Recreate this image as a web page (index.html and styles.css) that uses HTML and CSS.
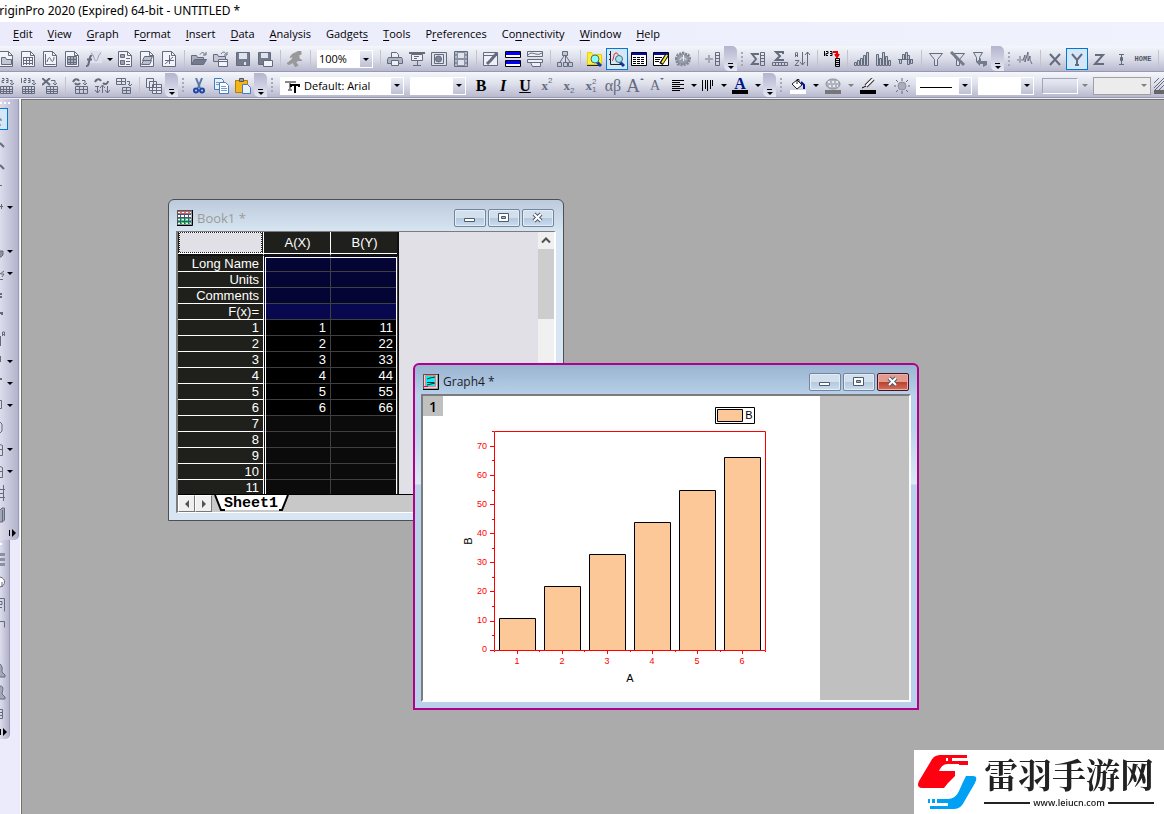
FILE: index.html
```html
<!DOCTYPE html>
<html lang="en">
<head>
<meta charset="utf-8">
<title>OriginPro 2020 (Expired) 64-bit - UNTITLED *</title>
<link rel="stylesheet" href="styles.css">
</head>
<body>
<svg class="sprite" aria-hidden="true">
  <symbol id="page" viewBox="0 0 16 16"><path fill="#f2f4fa" d="M1.5.5h9l4 4v11h-13z"/><path d="M10.5.5v4h4"/></symbol>
  <symbol id="i-folder" viewBox="0 0 16 16"><use href="#page"/><path fill="#c3c8d6" d="M3.5 13.5v-7h4l1 2h5v5z"/></symbol>
  <symbol id="i-book" viewBox="0 0 16 16"><use href="#page"/><path d="M3 6.5h10M3 9.5h10M3 12.5h10M3.5 6v8M6.5 6v8M9.5 6v8M12.5 6v8"/></symbol>
  <symbol id="i-graph" viewBox="0 0 16 16"><use href="#page"/><path d="M3.5 3v10.5h10M5 11c2-6 3-5 4-2s3 1 3-3"/></symbol>
  <symbol id="i-matrix" viewBox="0 0 16 16"><use href="#page"/><path fill="#a9afbf" d="M3.5 5.500h9v8h-9z"/><path d="M3 8.5h10M3 11.5h10M6.5 6v8M9.5 6v8"/></symbol>
  <symbol id="i-func" viewBox="0 0 16 16"><path fill="#dfe2ec" stroke="none" d="M4 0h12v12H4z"/><path stroke="#9aa0b4" d="M5 2c3 1 3 8 5 8s2-7 5-8"/><path stroke-width="2" d="M6 5c-2-1-2 2-3 6s-1 4-3 4M1 8.5h5"/></symbol>
  <symbol id="i-layout" viewBox="0 0 16 16"><use href="#page"/><path fill="#9aa0b4" d="M3.5 3.5h4v3h-4zM3.5 9.5h4v4h-4z"/><path d="M9 7.5h4M9 10.5h4M9 13.5h4"/></symbol>
  <symbol id="i-note" viewBox="0 0 16 16"><use href="#page"/><path fill="#b9bfce" d="M5.5 5.5h8l-2 4h-8zM4.5 9.5h8l-2 4h-8z"/></symbol>
  <symbol id="i-axis" viewBox="0 0 16 16"><use href="#page"/><path d="M8.5 4v9M4 9.5h9M4 13l8-7"/></symbol>
  <symbol id="i-open" viewBox="0 0 16 16"><path fill="#aab0c0" d="M.5 13.5v-9h5l1 2h6v2"/><path fill="#737b8c" d="M.5 13.5l3-5h12l-3 5z"/><path d="M9 3.5c2-3 4-2 5 0M15 1v3h-3"/></symbol>
  <symbol id="i-opent" viewBox="0 0 16 16"><path fill="#c3c8d6" d="M.5 10.500v-7h4l1 2h7v5z"/><path fill="#f2f4fa" d="M5.5 8.5h9v7h-9z"/><path d="M6 10.5h8M8 3c2-3 4-2 5 0M14 1v3h-3"/></symbol>
  <symbol id="i-save" viewBox="0 0 16 16"><path fill="#737b8c" d="M1.5 1.5h13v13h-13z"/><path fill="#dfe3ee" stroke="none" d="M4 2h8v6H4zM9 11h2v3H9z"/></symbol>
  <symbol id="i-savet" viewBox="0 0 16 16"><path fill="#737b8c" d="M1.5 1.5h12v12h-12z"/><path fill="#dfe3ee" stroke="none" d="M4 2h7v5H4z"/><path fill="#f2f4fa" d="M6.5 9.5h9v6h-9z"/></symbol>
  <symbol id="i-run" viewBox="0 0 16 16"><path fill="#999" stroke="#999" d="M11 .5h3v3h-2v4l3 2h-4l-2 2 2 3-3 1-2-4-4 2-2-1 5-4 1-3-3 1 2-3 4-2z"/></symbol>
  <symbol id="i-print" viewBox="0 0 16 16"><path fill="#eef0f7" d="M4.5 6V1.5h5l2 2V6"/><path fill="#aeb4c6" d="M1.5 6.5l-1 2v4h15v-4l-1-2z"/><path fill="#eef0f7" d="M4.5 9.5h7v5h-7z"/></symbol>
  <symbol id="i-slide" viewBox="0 0 16 16"><path stroke-width="2" d="M0 2h16"/><path fill="#eef0f7" d="M2.5 3.5h11v6h-11z"/><path d="M5 5.5h5M5 7.5h3M8.5 10v4M4 14.5h8"/></symbol>
  <symbol id="i-frame" viewBox="0 0 16 16"><path fill="#dfe2ec" d="M.5 1.5h15v13H.5zM3.5 3.5h9v9h-9z"/><circle cx="7.5" cy="8" r="3" fill="#7d8498"/></symbol>
  <symbol id="i-film" viewBox="0 0 16 16"><path fill="#8a91a2" d="M1.5.5h13v15h-13z"/><path fill="#dfe3ee" stroke="none" d="M5 2h6v5H5zM5 9h6v5H5z"/><path stroke="#dfe3ee" stroke-dasharray="2 2" d="M3 1v14M13 1v14"/></symbol>
  <symbol id="i-brush" viewBox="0 0 16 16"><path fill="#eef0f7" d="M.5 1.5h14v13H.5z"/><path d="M1 4.5h13"/><path stroke-width="3" d="M14 2L8 9l-4 4"/></symbol>
  <symbol id="i-blue" viewBox="0 0 16 16"><path fill="#fff" stroke="#000" d="M.5.5h15v6H.5zM.5 9.5h15v6H.5z"/><path stroke="#00f" stroke-width="3" d="M1 2.500h14M1 11.500h14"/></symbol>
  <symbol id="i-stack" viewBox="0 0 16 16"><path fill="#eef0f7" d="M.5.5h15v5H.5zM.5 8.5h15v3H.5zM3.5 11.5h10v4h-8z"/><path d="M1 4c4-5 8 2 14-2"/></symbol>
  <symbol id="i-tree" viewBox="0 0 16 16"><path fill="#c3c8d6" d="M5.5.5h5v4h-5zM.5 11.5h4v4h-4zM6.5 11.5h4v4h-4zM11.5 11.5h4v4h-4z"/><path d="M8.5 5v6M7 5l-4 6M9 5l4 6"/></symbol>
  <symbol id="i-find" viewBox="0 0 16 16"><path fill="#ffee33" stroke="#e6d200" d="M.5 3.5v-2h4l1 2h9v10H.5z"/><path stroke="#222" d="M0 14.5h13"/><path stroke="#1038a0" stroke-width="3" d="M10 11l4 4"/><circle cx="8" cy="8" r="4" fill="#8ff" stroke="#567"/></symbol>
  <symbol id="i-gfind" viewBox="0 0 16 16"><path stroke="#222" d="M1.5 0v13.5H15M0 3.5h2M0 8.5h2"/><path stroke="#e02020" d="M3 10c2-1 1-8 4-8s2 5 5 4"/><path stroke="#1038a0" stroke-width="3" d="M11 11l4 4"/><circle cx="10" cy="8" r="3.5" fill="#9fe6ee" stroke="#567"/></symbol>
  <symbol id="i-list" viewBox="0 0 16 16"><path fill="#fff" stroke="#000" d="M.5 1.5h15v13H.5z"/><path stroke="#0008c0" stroke-width="2" d="M1 3h14"/><path stroke="#000" stroke-dasharray="3 1" d="M2 6.5h12M2 8.5h12M2 10.5h12M2 12.5h12"/></symbol>
  <symbol id="i-edit" viewBox="0 0 16 16"><path fill="#fff" stroke="#000" d="M.5 1.5h15v13H.5z"/><path stroke="#0008c0" stroke-width="2" d="M1 3h14"/><path stroke="#000" d="M2 6.5h7M2 8.5h5M2 10.5h4"/><path stroke="#000" stroke-width="4" d="M14 4l-6 9"/><path stroke="#ffe633" stroke-width="2" d="M14 4l-5 8"/></symbol>
  <symbol id="i-gear" viewBox="0 0 16 16"><path fill="#9a9fac" stroke="#808693" stroke-dasharray="2 1" stroke-width="3" d="M1 8l2-4 5-2 5 2 2 4-2 4-5 2-5-1z"/><path stroke="#eef0f7" d="M5 9c0-3 6-3 6 0M8.5 4v6"/></symbol>
  <symbol id="i-addcol" viewBox="0 0 16 16"><path stroke="#a4a9b8" stroke-width="2" d="M0 8h8M4 4v8"/><path d="M10.5 1.5h4v13h-4zM10 4.5h4M10 7.5h4M10 10.5h4"/></symbol>
  <symbol id="i-sumcol" viewBox="0 0 16 16"><path stroke-width="2" d="M8 4V3H2l4 5-4 5h6v-1"/><path d="M10.5 1.5h4v13h-4zM10 4.5h4M10 7.5h4M10 10.5h4"/></symbol>
  <symbol id="i-sumrow" viewBox="0 0 16 16"><path stroke-width="2" d="M11 3V1H4l4 4-4 4h7V8"/><path d="M.5 11.5h15v3H.5zM3.5 12v3M6.5 12v3M9.5 12v3M12.5 12v3"/></symbol>
  <symbol id="i-sort" viewBox="0 0 16 16"><path d="M1.5 6V2l1-1 1 1v4M1 4.5h3M1 9.5h4l-4 5h4M8.5 1v13M6 11l2.5 3 2.5-3M13.5 15V1M11 4l2.5-3L16 4"/></symbol>
  <symbol id="i-setnum" viewBox="0 0 16 16"><path stroke="#000" d="M.5 0v5M2 .5h2v2H2v2h2M6 .5h2v4H6M6 2.5h2M11.5 7.500h4v8h-4zM11 9.5h4M11 11.5h4M11 13.5h4"/><path stroke="#e00" stroke-width="2" d="M9 1h4v3M11 3l2 3 2-3"/></symbol>
  <symbol id="i-bars1" viewBox="0 0 16 16"><path fill="#c3c8d6" d="M.5 11.5h2v3h-2zM3.5 9.5h2v5h-2zM6.5 7.5h2v7h-2zM9.5 4.5h2v10h-2zM12.5 1.5h2v13h-2z"/></symbol>
  <symbol id="i-bars2" viewBox="0 0 16 16"><path fill="#c3c8d6" d="M.5 3.5h2v11h-2zM3.5 7.5h2v7h-2zM6.5 1.5h2v13h-2zM9.5 5.5h2v9h-2zM12.5 9.5h2v5h-2z"/></symbol>
  <symbol id="i-bars3" viewBox="0 0 16 16"><path fill="#c3c8d6" d="M0 8.5h15M1.5 8.5h2v4h-2zM4.5 3.5h2v5h-2zM7.5 1.5h2v7h-2zM9.5 4.5h2v9h-2zM12.5 8.5h2v4h-2z"/></symbol>
  <symbol id="i-filter" viewBox="0 0 16 16"><path fill="#dfe3ee" d="M1.5 2.5h13l-5 6v6h-3v-6z"/></symbol>
  <symbol id="i-nofilter" viewBox="0 0 16 16"><path fill="#dfe3ee" d="M2.5 2.5h12l-5 6v6h-3v-6z"/><path stroke="#737b8c" stroke-width="3" d="M1 1l13 13"/></symbol>
  <symbol id="i-refilter" viewBox="0 0 16 16"><path fill="#dfe3ee" d="M1.5 1.5h9l-3 5v4h-3v-4z"/><path fill="#737b8c" stroke="none" d="M4 11l5-4v3h6v4l-4 2v-3H8v2z"/></symbol>
  <symbol id="i-wave" viewBox="0 0 16 16"><path stroke="#a4a9b8" stroke-width="2" d="M0 9h7M3 5v7"/><path d="M6 9l2-5v7l3-10v9l2-5v4l2 4"/></symbol>
  <symbol id="i-x" viewBox="0 0 16 16"><path stroke-width="2" d="M3 3l10 11M13 3L3 14"/></symbol>
  <symbol id="i-y" viewBox="0 0 16 16"><path stroke-width="2" d="M3 3l5 6 5-6M8 9v5M6 14h4"/></symbol>
  <symbol id="i-z" viewBox="0 0 16 16"><path stroke-width="2" d="M4 4h8L4 13h9"/></symbol>
  <symbol id="i-err" viewBox="0 0 16 16"><path d="M6 3.5h5M8.5 3v10M6 13.5h5"/><path fill="#646b7d" d="M7.5 6.5h2v3h-2z"/></symbol>
  <symbol id="i-imp" viewBox="0 0 16 16"><path d="M1.5 0v5M4 .5h2v2H4v2h2M8 .5h2v4H8M8 2.5h2M12 2.5h2v3M12 5l2 2 2-2M2.5 8.5h12v7h-12zM2 11.5h12M2 13.5h12M5.5 8v7M8.5 8v7M11.5 8v7"/></symbol>
  <symbol id="i-xl" viewBox="0 0 16 16"><path stroke-width="2" d="M0 0l8 7M8 0L0 7"/><path d="M9 2.5h4v3M11 5l2 2 2-2M4.5 8.5h11v7h-11zM4 11.5h11M4 13.5h11M8.5 8v7M11.5 8v7"/></symbol>
  <symbol id="i-recalc" viewBox="0 0 16 16"><path stroke-width="2" d="M1 4c2-4 5-3 6-1M8 5c-1 2-4 2-5 0"/><path d="M10 2.5h3v3M11 5l2 2 2-2M3.5 8.5h12v7h-12zM3 11.5h12M7.5 8v7M11.5 8v7"/></symbol>
  <symbol id="i-recalc2" viewBox="0 0 16 16"><path stroke-width="2" d="M1 4c2-4 5-3 6-1M9 5c2 2 5 1 5-2"/><path d="M3.5 8v7M1 12l2.5 3L6 12M8.5 15V8M6 10l2.5-3 2.5 3M13.5 8v7M11 12l2.5 3 2.5-3M1 8.5h4"/></symbol>
  <symbol id="i-trans" viewBox="0 0 16 16"><path d="M.5.5h9v6h-9zM0 3.5h9M5.5 1v6M11 3.5h2.5v3M12 6l2 2 2-2M6.5 9.5h8v6h-8zM6 12.5h8M10.5 9v6"/></symbol>
  <symbol id="i-dup" viewBox="0 0 16 16"><path fill="#e6e9f2" d="M.5.5h7v9h-7zM3.5 3.5h7v9h-7zM6.5 6.5h9v9h-9z"/><path d="M7 9.5h8M7 12.5h8M10.5 7v8"/></symbol>
  <symbol id="i-cut" viewBox="0 0 16 16"><path stroke="#5a7aa6" stroke-width="2" d="M5 0l4 10M11 0L7 10"/><circle cx="5" cy="12.5" r="2" stroke="#1c49a8" stroke-width="2"/><circle cx="11" cy="12.5" r="2" stroke="#1c49a8" stroke-width="2"/></symbol>
  <symbol id="i-copy" viewBox="0 0 16 16"><path fill="#e9f1fb" stroke="#4a78b8" d="M1.5.5h7l2 2v9h-9z"/><path fill="#fff" stroke="#4a78b8" d="M6.5 4.5h6l3 3v8h-9z"/><path stroke="#6d9bd6" d="M3 4.5h3M3 6.5h3M8 8.5h5M8 10.5h6M8 12.5h6"/></symbol>
  <symbol id="i-paste" viewBox="0 0 16 16"><path fill="#f2b61b" stroke="#b57b08" d="M.5 2.5h12v12H.5z"/><path fill="#999" stroke="#555" d="M4.5.5h4v3h-4z"/><path fill="#e9f1fb" stroke="#4a78b8" d="M7.5 6.5h5l3 3v6h-8z"/></symbol>
  <symbol id="i-align" viewBox="0 0 16 16"><path stroke="#000" d="M2 2.5h12M2 4.500h8M2 6.500h12M2 8.500h8M2 10.500h12M2 12.500h8"/></symbol>
  <symbol id="i-vlines" viewBox="0 0 16 16"><path stroke="#000" d="M2.5 2v11M5.5 2v9M7.5 2v11M10.500 2v9M12.500 2v6"/></symbol>
  <symbol id="i-bucket" viewBox="0 0 16 16"><path fill="#fff" stroke="#222" d="M2 6l5-4 5 5-5 4zM7 6V1.5h2V4"/><path stroke="#00118c" stroke-width="2" d="M11 4l3 3v4"/><path fill="#fff" stroke="none" d="M0 12h16v4H0z"/></symbol>
  <symbol id="i-palette" viewBox="0 0 16 16"><ellipse cx="8" cy="6" rx="7" ry="5" fill="#b0b4be" stroke="#8b909c"/><path stroke="#e8eaf2" stroke-width="2" stroke-dasharray="2 2" d="M3 4h10M4 8h9"/><path fill="#777" stroke="none" d="M0 12h16v4H0z"/></symbol>
  <symbol id="i-pen" viewBox="0 0 16 16"><path stroke="#333" stroke-width="4" d="M13 1L6 8"/><path stroke="#fff" stroke-width="2" d="M13 1L6 8"/><path stroke="#000" d="M2 10l4-2"/><path fill="#000" stroke="none" d="M0 12h16v4H0z"/></symbol>
  <symbol id="i-sun" viewBox="0 0 16 16"><circle cx="8" cy="8" r="4" fill="#a9aebb" stroke="#8a909f"/><path d="M8 0v3M8 13v3M0 8h2M14 8h2M2 2l2 2M14 2l-2 2M2 14l2-2M14 14l-2-2"/></symbol>
  <symbol id="i-hatch" viewBox="0 0 16 16"><path d="M0 5l5-5M0 10L10 0M1 12L13 0M5 12L16 1"/><path fill="#666" stroke="none" d="M0 12h16v4H0z"/></symbol>
  <symbol id="i-T" viewBox="0 0 16 16"><path stroke="#888" stroke-width="2" d="M1 5V4h9v1M5 4v9M3 12h4"/><path stroke="#000" stroke-width="2" d="M6 9V7h8v2M10 7v8"/></symbol>
  <symbol id="w-min" viewBox="0 0 16 12"><path fill="#fff" stroke="#4d5a6b" d="M2.5 6.5h10v3h-10z"/></symbol>
  <symbol id="w-max" viewBox="0 0 16 12"><path fill="#fff" stroke="#4d5a6b" d="M2.5 1.5h10v8h-10z"/><path fill="#9cb3cc" stroke="#4d5a6b" d="M5.500 4.500h4v2h-4z"/></symbol>
  <symbol id="w-close" viewBox="0 0 16 12"><path stroke="#4d5a6b" stroke-width="4" d="M4 2l7 7M11 2L4 9"/><path stroke="#fff" stroke-width="2" d="M4 2l7 7M11 2L4 9"/></symbol>
</svg>

<header class="titlebar"><h1>OriginPro 2020 (Expired) 64-bit - UNTITLED *</h1></header>
<nav class="menubar" aria-label="Main menu">
  <button><u>E</u>dit</button><button><u>V</u>iew</button><button><u>G</u>raph</button><button>F<u>o</u>rmat</button><button><u>I</u>nsert</button><button><u>D</u>ata</button><button><u>A</u>nalysis</button><button>Gadget<u>s</u></button><button><u>T</u>ools</button><button>P<u>r</u>eferences</button><button>Co<u>n</u>nectivity</button><button><u>W</u>indow</button><button><u>H</u>elp</button>
</nav>

<div class="toolbar" role="toolbar" aria-label="Standard">
  <button class="tool" aria-label="New folder"><svg><use href="#i-folder"/></svg></button>
  <button class="tool" aria-label="New workbook"><svg><use href="#i-book"/></svg></button>
  <button class="tool" aria-label="New graph"><svg><use href="#i-graph"/></svg></button>
  <button class="tool" aria-label="New matrix"><svg><use href="#i-matrix"/></svg></button>
  <button class="tool" aria-label="New function plot"><svg><use href="#i-func"/></svg></button>
  <button class="drop" aria-label="Function plot types"></button>
  <button class="tool" aria-label="New layout"><svg><use href="#i-layout"/></svg></button>
  <button class="tool" aria-label="New notes"><svg><use href="#i-note"/></svg></button>
  <button class="tool" aria-label="Digitize image"><svg><use href="#i-axis"/></svg></button>
  <span class="sep"></span>
  <button class="tool" aria-label="Open"><svg><use href="#i-open"/></svg></button>
  <button class="tool" aria-label="Open template"><svg><use href="#i-opent"/></svg></button>
  <button class="tool" aria-label="Save"><svg><use href="#i-save"/></svg></button>
  <button class="tool" aria-label="Save template"><svg><use href="#i-savet"/></svg></button>
  <span class="sep"></span>
  <button class="tool" aria-label="Run"><svg><use href="#i-run"/></svg></button>
  <span class="sep"></span>
  <label class="combo zoom"><select aria-label="Zoom"><option>100%</option></select><i></i></label>
  <span class="sep"></span>
  <button class="tool" aria-label="Print"><svg><use href="#i-print"/></svg></button>
  <button class="tool" aria-label="Slide show"><svg><use href="#i-slide"/></svg></button>
  <button class="tool" aria-label="Send to presentation"><svg><use href="#i-frame"/></svg></button>
  <button class="tool" aria-label="Make movie"><svg><use href="#i-film"/></svg></button>
  <span class="sep"></span>
  <button class="tool" aria-label="Theme brush"><svg><use href="#i-brush"/></svg></button>
  <button class="tool" aria-label="Split"><svg><use href="#i-blue"/></svg></button>
  <button class="tool" aria-label="Merge"><svg><use href="#i-stack"/></svg></button>
  <span class="sep"></span>
  <button class="tool" aria-label="Hierarchy"><svg><use href="#i-tree"/></svg></button>
  <span class="sep"></span>
  <button class="tool" aria-label="Project explorer"><svg><use href="#i-find"/></svg></button>
  <button class="tool on" aria-label="Quick view" aria-pressed="true"><svg><use href="#i-gfind"/></svg></button>
  <button class="tool" aria-label="Results log"><svg><use href="#i-list"/></svg></button>
  <button class="tool" aria-label="Script window"><svg><use href="#i-edit"/></svg></button>
  <button class="tool" aria-label="Code builder"><svg><use href="#i-gear"/></svg></button>
  <span class="sep"></span>
  <button class="tool" aria-label="Add column"><svg><use href="#i-addcol"/></svg></button>
  <button class="more" aria-label="Toolbar options"></button><span class="grip"></span>
  <button class="tool" aria-label="Column statistics"><svg><use href="#i-sumcol"/></svg></button>
  <button class="tool" aria-label="Row statistics"><svg><use href="#i-sumrow"/></svg></button>
  <button class="tool" aria-label="Sort"><svg><use href="#i-sort"/></svg></button>
  <span class="sep"></span>
  <button class="tool" aria-label="Set column values"><svg><use href="#i-setnum"/></svg></button>
  <span class="sep"></span>
  <button class="tool" aria-label="Row numbers"><svg><use href="#i-bars1"/></svg></button>
  <button class="tool" aria-label="Uniform random"><svg><use href="#i-bars2"/></svg></button>
  <button class="tool" aria-label="Normal random"><svg><use href="#i-bars3"/></svg></button>
  <span class="sep"></span>
  <button class="tool" aria-label="Filter"><svg><use href="#i-filter"/></svg></button>
  <button class="tool" aria-label="Disable filter"><svg><use href="#i-nofilter"/></svg></button>
  <button class="tool" aria-label="Reapply filter"><svg><use href="#i-refilter"/></svg></button>
  <button class="more" aria-label="Toolbar options"></button><span class="grip"></span>
  <button class="tool" aria-label="Add sparkline"><svg><use href="#i-wave"/></svg></button>
  <span class="sep"></span>
  <button class="tool" aria-label="Set as X"><svg><use href="#i-x"/></svg></button>
  <button class="tool on" aria-label="Set as Y" aria-pressed="true"><svg><use href="#i-y"/></svg></button>
  <button class="tool" aria-label="Set as Z"><svg><use href="#i-z"/></svg></button>
  <button class="tool" aria-label="Set as error"><svg><use href="#i-err"/></svg></button>
  <button class="tool home">HOME</button>
  <span class="sep"></span>
</div>

<div class="toolbar" role="toolbar" aria-label="Format">
  <button class="tool" aria-label="Import single"><svg><use href="#i-imp"/></svg></button>
  <button class="tool" aria-label="Import multiple"><svg><use href="#i-imp"/></svg></button>
  <button class="tool" aria-label="Import Excel"><svg><use href="#i-xl"/></svg></button>
  <span class="sep"></span>
  <button class="tool" aria-label="Re-import"><svg><use href="#i-recalc"/></svg></button>
  <button class="tool" aria-label="Recalculate"><svg><use href="#i-recalc2"/></svg></button>
  <button class="tool" aria-label="Transfer"><svg><use href="#i-trans"/></svg></button>
  <span class="sep"></span>
  <button class="tool" aria-label="Duplicate"><svg><use href="#i-dup"/></svg></button>
  <button class="more" aria-label="Toolbar options"></button><span class="grip"></span>
  <button class="tool" aria-label="Cut"><svg><use href="#i-cut"/></svg></button>
  <button class="tool" aria-label="Copy"><svg><use href="#i-copy"/></svg></button>
  <button class="tool" aria-label="Paste"><svg><use href="#i-paste"/></svg></button>
  <button class="more" aria-label="Toolbar options"></button><span class="grip"></span>
  <label class="combo font"><svg><use href="#i-T"/></svg><select aria-label="Font"><option>Default: Arial</option></select><i></i></label>
  <label class="combo size"><select aria-label="Font size"><option></option></select><i></i></label>
  <button class="tool glyph b">B</button>
  <button class="tool glyph it">I</button>
  <button class="tool glyph un">U</button>
  <button class="tool glyph sm">x<sup>2</sup></button>
  <button class="tool glyph sm">x<sub>2</sub></button>
  <button class="tool glyph sm">x<span class="both"><span>2</span><span>1</span></span></button>
  <button class="tool glyph gk">αβ</button>
  <button class="tool glyph big" aria-label="Increase font">A<em></em></button>
  <button class="tool glyph little" aria-label="Decrease font">A<em></em></button>
  <button class="tool slim" aria-label="Align left"><svg><use href="#i-align"/></svg></button><button class="drop" aria-label="Alignment"></button>
  <button class="tool slim" aria-label="Vertical lines"><svg><use href="#i-vlines"/></svg></button><button class="drop" aria-label="Vertical alignment"></button>
  <button class="tool wide glyph fc"><span>A</span></button><button class="drop" aria-label="Font colour"></button>
  <button class="more" aria-label="Toolbar options"></button><span class="grip"></span>
  <button class="tool wide" aria-label="Fill colour"><svg><use href="#i-bucket"/></svg></button><button class="drop" aria-label="Fill colours"></button>
  <button class="tool wide" aria-label="Palette"><svg><use href="#i-palette"/></svg></button><button class="drop dim" aria-label="Palettes"></button>
  <button class="tool wide" aria-label="Line colour"><svg><use href="#i-pen"/></svg></button><button class="drop" aria-label="Line colours"></button>
  <button class="tool" aria-label="Lighting"><svg><use href="#i-sun"/></svg></button>
  <label class="combo line"><select aria-label="Line style"><option></option></select><i></i></label>
  <label class="combo size"><select aria-label="Line width"><option></option></select><i></i></label>
  <button class="swatch" aria-label="Pattern"></button><button class="drop dim" aria-label="Patterns"></button>
  <label class="combo off"><select aria-label="Pattern size" disabled><option></option></select><i></i></label>
  <button class="tool" aria-label="Hatch"><svg><use href="#i-hatch"/></svg></button>
</div>

<div class="body">
  <aside class="dock">
    <div class="rail tools">
      <span class="dots"></span>
      <button class="on" aria-label="Pointer"><svg><path d="M0 8h1v2M0 14h1"/></svg></button>
      <button aria-label="Zoom in"><svg><path stroke-width="2" d="M0 10l4 4"/></svg></button>
      <button aria-label="Zoom out"><svg><path stroke-width="2" d="M0 10l4 4"/></svg></button>
      <button aria-label="Reader"><svg><path d="M0 8.5h2"/></svg></button>
      <button aria-label="Data cursor"><svg><path d="M0 7.5h3M1.5 5v5"/></svg><i></i></button>
      <button aria-label="Annotation"><svg></svg></button>
      <button aria-label="Selector"><svg><path fill="#8a91a2" d="M0 8h3v4l-2 2H0"/></svg><i></i></button>
      <button aria-label="Mask"><svg><path d="M0 9l4-3M1 9h3l-2 3M0 14.5h3"/></svg><i></i></button>
      <button aria-label="Draw data"><svg><path stroke-width="2" d="M0 7h2M0 10h2"/></svg></button>
      <button aria-label="Text"><svg><path stroke-width="2" d="M0 4h2v2"/></svg></button>
      <button aria-label="Arrow"><svg><path d="M.5 5v10M2.5 5V1h2v4M2 3.5h2"/></svg></button>
      <button aria-label="Line"><svg><path d="M.5 3v6"/></svg><i></i></button>
      <button aria-label="Curve"><svg><path stroke-width="2" d="M0 4h2"/></svg><i></i></button>
      <button aria-label="Rectangle"><svg><path d="M0 3.5h1.5v8H0"/></svg><i></i></button>
      <button aria-label="Pan"><svg><path d="M0 3l2 2v7l-2 2"/></svg></button>
      <button aria-label="Region"><svg><path d="M0 3.5l2.5 1v10H0M0 8.5h2"/></svg><i></i></button>
      <button aria-label="Insert"><svg><path d="M0 3.5l2.5 1v10H0M0 8.5h2"/></svg><i></i></button>
      <button aria-label="Rescale"><svg><path d="M3.5 0v16M0 4.5h5M0 8.5h3M0 12.5h5"/></svg></button>
      <button aria-label="Rotate"><svg><path fill="#a2a8b8" d="M0 3l2-2h2.500v12l-2 2H0M2.500 3v12"/></svg></button>
      <b></b>
    </div>
    <div class="rail graph">
      <span class="dots"></span>
      <button aria-label="Layers"><svg><path stroke="#8a91a2" stroke-width="3" d="M0 2.500h5M0 7.500h5M0 12.500h5"/></svg></button>
      <button aria-label="Scale"><svg><path fill="#fff" d="M0 3c6 1 6 9 0 10M2 8v5"/></svg></button>
      <button aria-label="Legend"><svg><path d="M0 2.5h4.5v13M0 5.5h2v3H0M0 11.5h2"/></svg></button>
      <button aria-label="Frame"><svg><path d="M0 3.5h4.5v6"/></svg></button>
      <button aria-label="Blank"><svg></svg></button>
      <button aria-label="Object"><svg><path fill="#a2a8b8" d="M0 2c3 2 2 6 2 8l3 3v2H0"/></svg></button>
      <button aria-label="Object group"><svg><path fill="#a2a8b8" d="M0 2c5 0 2 6 2 8l3 3v2H0"/></svg></button>
      <button aria-label="Table"><svg><path d="M0 3.5h2.5v9H0M0 6.5h2M0 9.5h2"/></svg></button>
      <b></b>
    </div>
  </aside>

  <main class="workspace">
    <section class="window book" aria-label="Book1">
      <header class="caption">
        <svg class="appicon" viewBox="0 0 16 16"><path fill="#fff" d="M0 0h15v15H0z"/><path fill="#f66" d="M1 1h13v3H1z"/><path fill="#2e6" d="M1 8h13v6H1z"/><path stroke="#457" d="M0 4.5h14M0 7.500h14M0 11.5h14M3.5 4v10M7.5 4v10M11.5 4v10"/><path stroke="#fff" stroke-dasharray="2 2" d="M1 2.500h13M1 13.500h13M1 9.500h13"/><path stroke="#000" d="M15.5 0v15.5H0"/><path stroke="#555" d="M.5 15V.5H15"/></svg>
        <h2>Book1 *</h2>
        <div class="ctl"><button aria-label="Minimize"><svg><use href="#w-min"/></svg></button><button aria-label="Maximize"><svg><use href="#w-max"/></svg></button><button aria-label="Close"><svg><use href="#w-close"/></svg></button></div>
      </header>
      <div class="client">
        <div class="sheet">
          <div class="grid">
            <table>
              <thead><tr><th class="corner"><span></span></th><th>A(X)</th><th>B(Y)</th></tr></thead>
              <tbody class="meta">
                <tr><th>Long Name</th><td></td><td></td></tr>
                <tr><th>Units</th><td></td><td></td></tr>
                <tr><th>Comments</th><td></td><td></td></tr>
                <tr class="fx"><th>F(x)=</th><td></td><td></td></tr>
              </tbody>
              <tbody>
                <tr><th>1</th><td>1</td><td>11</td></tr>
                <tr><th>2</th><td>2</td><td>22</td></tr>
                <tr><th>3</th><td>3</td><td>33</td></tr>
                <tr><th>4</th><td>4</td><td>44</td></tr>
                <tr><th>5</th><td>5</td><td>55</td></tr>
                <tr><th>6</th><td>6</td><td>66</td></tr>
              </tbody>
              <tbody class="empty">
                <tr><th>7</th><td></td><td></td></tr>
                <tr><th>8</th><td></td><td></td></tr>
                <tr><th>9</th><td></td><td></td></tr>
                <tr><th>10</th><td></td><td></td></tr>
                <tr><th>11</th><td></td><td></td></tr>
              </tbody>
            </table>
            <div class="selection"></div>
          </div>
          <div class="scroll"><svg viewBox="0 0 16 16"><path stroke="#505050" stroke-width="2" d="M4 10l4-4 4 4"/></svg><span></span></div>
        </div>
        <div class="tabs">
          <button class="step" aria-label="Previous sheet"><svg viewBox="0 0 8 8"><path fill="#555" stroke="none" d="M6 0v8L2 4z"/></svg></button>
          <button class="step" aria-label="Next sheet"><svg viewBox="0 0 8 8"><path fill="#555" stroke="none" d="M2 0v8l4-4z"/></svg></button>
          <button class="tab"><svg viewBox="0 0 76 16" aria-hidden="true"><path fill="#fff" stroke="none" d="M1 0h74l-6 15H8z"/><path stroke="#000" stroke-width="2" d="M2 0l6 15h4M75 0l-6 15h-3"/></svg><span>Sheet1</span></button>
        </div>
      </div>
    </section>

    <section class="window plot" aria-label="Graph4">
      <header class="caption">
        <svg class="appicon" viewBox="0 0 16 16"><path fill="#ddd" d="M0 0h15v15H0z"/><path fill="#1ee" stroke="#f77" d="M2.5 1.5h10v11h-10z"/><path stroke="#033" d="M4 5l3-1 5-1M4 8.5h7M4 11l4-1 4-1"/><path stroke="#d06" d="M1 12.5h4"/><path stroke="#000" d="M15.5 0v15.5H0"/><path stroke="#555" d="M.5 15V.5H15"/></svg>
        <h2>Graph4 *</h2>
        <div class="ctl"><button aria-label="Minimize"><svg><use href="#w-min"/></svg></button><button aria-label="Maximize"><svg><use href="#w-max"/></svg></button><button class="close" aria-label="Close"><svg><use href="#w-close"/></svg></button></div>
      </header>
      <div class="client">
        <button class="layer">1</button>
        <svg class="chart" viewBox="423 396 397 304" role="img" aria-label="Column chart of B against A">
          <g fill="#fdc897" stroke="#000">
            <path d="M499.5 650v-31.5h36v31.5M544.5 650v-63.5h36v63.5M589.5 650v-95.5h36v95.5M634.5 650v-127.5h36v127.5M679.5 650v-159.5h36v159.5M724.5 650v-192.5h36v192.5"/>
            <path fill="#fff" d="M715.5 407.5h39v16h-39z"/><path d="M717.5 409.5h25v12h-25z"/>
          </g>
          <path stroke="#f00" d="M494.5 431.5h271v219h-271zM490 446.5h4M490 475.5h4M490 504.5h4M490 533.5h4M490 562.5h4M490 591.5h4M490 621.5h4M490 650.5h4M492 431.5h2M492 460.5h2M492 490.5h2M492 519.5h2M492 548.5h2M492 577.5h2M492 606.5h2M492 635.5h2M517.5 651v3M562.5 651v3M607.5 651v3M652.5 651v3M697.5 651v3M742.5 651v3M494.5 651v1M539.5 651v1M584.5 651v1M630.5 651v1M675.5 651v1M720.5 651v1M765.5 651v1"/>
          <g class="ticks" text-anchor="end"><text x="487" y="449">70</text><text x="487" y="478">60</text><text x="487" y="507">50</text><text x="487" y="536">40</text><text x="487" y="565">30</text><text x="487" y="594">20</text><text x="487" y="623">10</text><text x="487" y="652">0</text></g>
          <g class="ticks" text-anchor="middle"><text x="517" y="664">1</text><text x="562" y="664">2</text><text x="607" y="664">3</text><text x="652" y="664">4</text><text x="697" y="664">5</text><text x="742" y="664">6</text></g>
          <g class="names" text-anchor="middle"><text x="749" y="419">B</text><text x="630" y="682">A</text><text transform="translate(472 541) rotate(-90)">B</text></g>
        </svg>
      </div>
    </section>
  </main>
</div>

<div class="brand">
  <svg class="mark" viewBox="0 0 60 58"><path fill="#ff0011" d="M23 1h26v3H29v3h21v3H30c-5 0-7 3-9 7h16v5l-7 7-4 5H4c-4 0-5-3-3-7L13 7c2-4 5-6 10-6z"/><path fill="#00a0f5" d="M48 22h7c4 0 4 3 2 7L46 48c-2 4-5 7-10 7H12v-3h18v-3H10v-4h20c6 0 9-4 11-8l4-9z"/><path fill="#fff" d="M25 12h12l-5 5H22zM28 4h10v3H28z"/><path fill="#ff0011" d="M30 4h4v3h-4zM41 8h9v3h-9z"/><path stroke="#fff" stroke-width="2" d="M13 45v4M18 45v4"/></svg>
  <div class="words"><strong lang="zh">雷羽手游网</strong><a href="#">www.leiucn.com</a></div>
</div>
</body>
</html>
```
FILE: styles.css
```css
* { box-sizing: border-box; }
html, body { height: 100%; }
body { margin: 0; display: flex; flex-direction: column; overflow: hidden; background: #ebebfb; font: 11px/16px "Open Sans", "Noto Sans", sans-serif; color: #000; }
button, select { font: inherit; color: inherit; padding: 0; margin: 0; border: 0; background: none; border-radius: 0; }
h1, h2 { margin: 0; font-weight: 400; }
svg { fill: none; stroke: #646b7d; }
.sprite { position: absolute; width: 0; height: 0; }

.titlebar { flex: none; height: 22px; background: #fff; overflow: hidden; }
.titlebar h1 { margin-left: -10px; font: 12px/22px "Noto Sans", "Open Sans", sans-serif; white-space: nowrap; }
.menubar { flex: none; display: flex; gap: 15px; height: 24px; padding-left: 13px; align-items: center; background: linear-gradient(90deg, #ebebfb, #f0f2fd); }
.menubar u { text-underline-offset: 2px; }

.toolbar { flex: none; display: flex; align-items: center; height: 26px; padding-top: 1px; border-bottom: 1px solid #9899b0; background: linear-gradient(#f5f7fc, #dcdeea 50%, #b8b9cf); overflow: hidden; }
.toolbar + .toolbar { padding-top: 2px; }
.toolbar > * { flex: none; }
.toolbar > .tool:first-child { margin-left: -5px; }
.tool { width: 22px; height: 22px; display: flex; align-items: center; justify-content: center; position: relative; }
.tool svg { width: 16px; height: 16px; }
.tool.on { background: #d5e6f7; border: 1px solid #0078d7; }
.tool.slim { width: 20px; margin-right: 1px; }
.tool.wide { width: 24px; margin-right: 1px; }
.sep { width: 8px; height: 18px; background: linear-gradient(#c3c3c8, #c3c3c8) 4px 0 / 1px 18px no-repeat; }
.drop { width: 9px; height: 22px; display: flex; align-items: center; justify-content: center; }
.wide + .drop, .swatch + .drop { width: 10px; }
.drop::after, .combo i::after, .rail i { content: ""; border: 3px solid transparent; border-top-color: #000; border-bottom: 0; }
.drop.dim::after, .combo.off i::after { border-top-color: #808080; }
.more { align-self: stretch; width: 13px; margin-top: -1px; display: flex; flex-direction: column; align-items: center; justify-content: flex-end; gap: 2px; padding-bottom: 2px; background: linear-gradient(#b4b5ce, #e6e7f4); border-radius: 0 5px 0 5px; }
.more::before { content: ""; width: 5px; height: 1px; background: #000; }
.more::after { content: ""; border: 3px solid transparent; border-top-color: #000; border-bottom: 0; }
.grip { width: 10px; height: 15px; background: repeating-linear-gradient(#a6a8b8 0 2px, transparent 2px 4px) 4px 0 / 2px 15px no-repeat; }
.home { font: 7px/8px "Liberation Mono", monospace; color: #505668; font-weight: 700; }

.combo { display: flex; align-items: stretch; height: 18px; background: #fff; border: 1px solid #fff; }
.combo select { appearance: none; flex: 1; min-width: 0; outline: 0; }
.combo i { width: 12px; display: flex; align-items: center; justify-content: center; background: linear-gradient(#e9ebf4, #bfc1d4); }
.combo svg { width: 16px; height: 16px; margin: 0 3px 0 4px; }
.combo.zoom { width: 56px; margin: 0 3px; padding-left: 1px; }
.combo.font { width: 124px; margin: 0 6px 0 3px; }
.combo.size { width: 56px; margin-right: 4px; }
.combo.line { width: 56px; margin: 0 6px 0 3px; }
.combo.line select { background: linear-gradient(#000, #000) 3px 9px / 32px 1px no-repeat; }
.combo.off { width: 58px; margin-left: 3px; background: #ececec; border-color: #a0a0a0; }
.combo.off i { background: none; }
.swatch { width: 36px; height: 16px; margin: 0 2px 0 4px; border: 1px solid #a4a5b8; border-right-color: #fff; border-bottom-color: #fff; }

.glyph { font-family: "Liberation Serif", serif; font-size: 16px; font-weight: 700; color: #646b7d; }
.glyph.b, .glyph.it, .glyph.un { color: #000; }
.glyph.it { font-style: italic; }
.glyph.un { text-decoration: underline; }
.glyph.sm { font-size: 13px; }
.glyph sup, .glyph sub, .both { font: 8px/8px "Liberation Sans", sans-serif; }
.glyph sup { align-self: flex-start; margin-top: 2px; }
.glyph sub { align-self: flex-end; margin-bottom: 2px; }
.both { display: flex; flex-direction: column; align-self: center; }
.glyph.gk { font-weight: 400; }
.glyph.big { font-size: 19px; font-weight: 400; }
.glyph.little { font-size: 14px; font-weight: 400; }
.glyph em { align-self: flex-start; margin-top: 3px; border: 2px solid transparent; border-bottom-color: #646b7d; border-top: 0; }
.glyph.little em { border-top: 2px solid #646b7d; border-bottom: 0; }
.glyph.fc span { width: 16px; line-height: 12px; color: #00118c; border-bottom: 4px solid #000; }

.body { flex: 1; display: flex; min-height: 0; margin-top: 1px; }
.dock { flex: none; width: 21px; overflow: hidden; border-right: 1px solid #fff; }
.rail { width: 19px; background: linear-gradient(90deg, #dcdcec, #b2b3cb); border-right: 1px solid #9c9db5; border-radius: 0 0 5px 0; }
.rail.graph { width: 10px; }
.rail .dots { display: block; height: 9px; background: repeating-linear-gradient(90deg, #fff 0 2px, transparent 2px 4px) 0 3px / 12px 2px no-repeat; }
.rail.graph .dots { background-size: 3px 2px; }
.rail button { display: flex; align-items: center; width: 17px; height: 22px; }
.rail svg { width: 7px; height: 16px; }
.rail button.on { width: 8px; background: #d5e6f7; border: 1px solid #0078d7; border-left: 0; }
.rail b { display: flex; align-items: center; gap: 2px; height: 14px; padding-left: 9px; }
.rail.graph b { padding-left: 0; }
.rail b::before { content: ""; width: 1px; height: 6px; background: #000; }
.rail b::after { content: ""; border: 4px solid transparent; border-left-color: #000; border-right: 0; }

.workspace { flex: 1; position: relative; min-width: 0; overflow: hidden; background: #ababab; border: solid #73736e; border-width: 1px 0 0 1px; }
.window { position: absolute; display: flex; flex-direction: column; padding: 0 7px 7px; }
.book { left: 146px; top: 99px; width: 396px; height: 322px; border: 1px solid #4c4f54; border-radius: 6px 6px 0 0; background: linear-gradient(#bccbdc, #d8e5f2 32px); }
.plot { left: 391px; top: 263px; width: 506px; height: 347px; padding: 0 6px 6px; border: 2px solid #b1008a; border-radius: 6px 6px 0 0; background: linear-gradient(#99b4d1, #b9d1ea 31px, #b9d1ea 60px, #dce9f7 119px, #b9d1ea 120px); }
.caption { flex: none; height: 31px; display: flex; align-items: center; gap: 4px; padding: 4px 2px 0 1px; }
.plot .caption { height: 29px; padding: 5px 2px 0 2px; }
.caption h2 { flex: 1; font-size: 12px; line-height: 18px; color: #1c1c28; }
.book h2 { font-size: 13px; color: #9b9b9b; }
.appicon { width: 16px; height: 16px; }
.ctl { display: flex; gap: 2px; }
.ctl button { width: 32px; height: 18px; display: flex; align-items: center; justify-content: center; border: 1px solid #73859c; border-radius: 2px; background: linear-gradient(#d2dfed 50%, #b5c8dc 50%, #cbdcee); box-shadow: inset 0 0 0 1px #e3edf7; }
.ctl svg { width: 16px; height: 12px; }
.ctl .close { background: linear-gradient(#e39a8e 50%, #b8402c 50%, #d4705c); border-color: #4a1020; box-shadow: inset 0 0 0 1px #eab0a6; }
.client { flex: 1; min-height: 0; display: flex; flex-direction: column; position: relative; border: 2px solid; border-color: #7c7c7c #fff #fff #7c7c7c; }
.book .client { border-width: 1px 2px 1px 2px; }

.sheet { flex: 1; min-height: 0; display: flex; justify-content: space-between; overflow: hidden; background: #e1e0e6; }
.grid { position: relative; }
.grid table { border-collapse: separate; border-spacing: 0; table-layout: fixed; width: 221px; background: #1f201b; color: #fff; font: 13px/15px "Liberation Sans", Arial, sans-serif; border-right: 1px solid #111; }
.grid th { font-weight: 400; padding: 0; }
.grid thead th { height: 24px; padding: 0 0 2px 1px; border-bottom: 2px solid #111; border-right: 1px solid #fff; box-shadow: inset 0 -1px #fff; }
.grid thead th:last-child { border-right-color: #111; }
.grid thead .corner { width: 86px; padding: 0 1px 1px; }
.corner span { display: block; height: 19px; margin: 1px; background: #e1e0e6; outline: 1px dotted #fff; }
.grid tbody th { height: 16px; background: #1f201b; border-right: 1px solid #fff; border-bottom: 1px solid #fff; padding-right: 4px; text-align: right; }
.grid td { background: #000; border-right: 1px solid #404040; border-bottom: 1px solid #404040; padding: 0 4px 0 0; text-align: right; }
.grid .meta td { background: #050535; }
.grid .meta .fx td { background: #08084e; }
.grid .empty td { background: #0b0b0b; }
.selection { position: absolute; inset: 25px 2px 0 87px; border: solid #fff; border-width: 1px 1px 0; }
.scroll { width: 16px; background: #f0f0f0; }
.scroll svg { display: block; width: 16px; height: 17px; }
.scroll span { display: block; height: 70px; background: #cdcdcd; }
.tabs { flex: none; display: flex; height: 18px; border-top: 1px solid #000; background: #c8c8c8; }
.step { width: 17px; display: flex; align-items: center; justify-content: center; background: #f0f0f0; border: 1px solid #fff; border-right-color: #777; border-bottom-color: #777; }
.step svg { width: 8px; height: 8px; }
.tab { position: relative; width: 76px; margin-left: 1px; font: 700 15px/17px "Liberation Mono", monospace; }
.tab svg { position: absolute; inset: 0; width: 76px; height: 16px; }
.tab span { position: relative; }

.plot .client { background: #c0c0c0; }
.chart { display: block; width: 397px; height: 304px; background: #fff; }
.layer { position: absolute; left: 0; top: 0; width: 20px; height: 20px; padding-top: 1px; background: #c0c0c0; font: 600 14px/20px "Open Sans", sans-serif; }
.ticks { font: 9px "Liberation Sans", sans-serif; fill: #f00; stroke: none; }
.names { font: 11px "Liberation Sans", sans-serif; fill: #000; stroke: none; }

.brand { position: fixed; right: 0; bottom: 0; display: flex; gap: 6px; width: 250px; height: 64px; padding: 4px 10px 0 4px; background: #fff; }
.mark { flex: none; width: 60px; height: 58px; stroke: none; }
.words { flex: 1; color: #222; }
.words strong { display: block; font: 700 34px/40px "Noto Serif CJK SC", "Noto Sans CJK SC", sans-serif; white-space: nowrap; }
.words a { display: flex; align-items: center; gap: 3px; margin-top: 4px; font: 600 9px/10px "Open Sans", sans-serif; color: inherit; text-decoration: none; }
.words a::before, .words a::after { content: ""; flex: 1; height: 2px; background: #222; }
```
